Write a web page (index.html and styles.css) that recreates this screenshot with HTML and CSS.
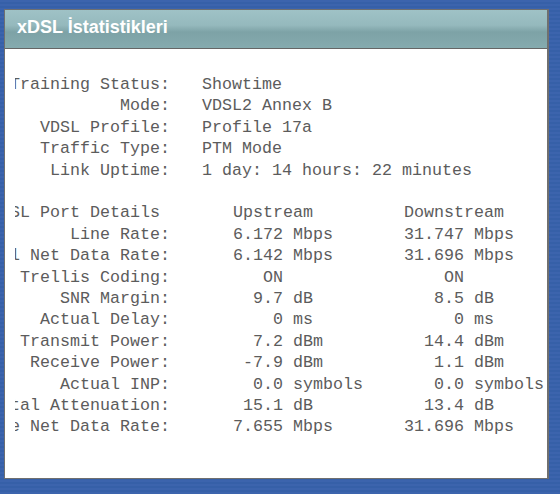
FILE: index.html
```html
<!DOCTYPE html>
<html lang="tr">
<head>
    <meta charset="UTF-8" />
    <title>xDSL İstatistikleri</title>
    <link rel="stylesheet" href="styles.css">
</head>
<body>
    <div class="panel">
        <div class="panel-head">xDSL İstatistikleri</div>
        <div class="panel-body">
            <div class="clip">
                <div class="summary">
                    <span class="lbl">Training Status:</span><span>Showtime</span>
                    <span class="lbl">Mode:</span><span>VDSL2 Annex B</span>
                    <span class="lbl">VDSL Profile:</span><span>Profile 17a</span>
                    <span class="lbl">Traffic Type:</span><span>PTM Mode</span>
                    <span class="lbl">Link Uptime:</span><span>1 day: 14 hours: 22 minutes</span>
                </div>

                <div class="details">
                    <span class="lbl title">VDSL Port Details</span>
                    <span class="up-head">Upstream</span>
                    <span class="down-head">Downstream</span>

                    <span class="lbl">Line Rate:</span>
                    <span class="num">6.172</span><span class="unit">Mbps</span>
                    <span class="num">31.747</span><span class="unit">Mbps</span>

                    <span class="lbl">Actual Net Data Rate:</span>
                    <span class="num">6.142</span><span class="unit">Mbps</span>
                    <span class="num">31.696</span><span class="unit">Mbps</span>

                    <span class="lbl">Trellis Coding:</span>
                    <span class="num">ON</span><span class="unit"></span>
                    <span class="num">ON</span><span class="unit"></span>

                    <span class="lbl">SNR Margin:</span>
                    <span class="num">9.7</span><span class="unit">dB</span>
                    <span class="num">8.5</span><span class="unit">dB</span>

                    <span class="lbl">Actual Delay:</span>
                    <span class="num">0</span><span class="unit">ms</span>
                    <span class="num">0</span><span class="unit">ms</span>

                    <span class="lbl">Transmit Power:</span>
                    <span class="num">7.2</span><span class="unit">dBm</span>
                    <span class="num">14.4</span><span class="unit">dBm</span>

                    <span class="lbl">Receive Power:</span>
                    <span class="num">-7.9</span><span class="unit">dBm</span>
                    <span class="num">1.1</span><span class="unit">dBm</span>

                    <span class="lbl">Actual INP:</span>
                    <span class="num">0.0</span><span class="unit">symbols</span>
                    <span class="num">0.0</span><span class="unit">symbols</span>

                    <span class="lbl">Total Attenuation:</span>
                    <span class="num">15.1</span><span class="unit">dB</span>
                    <span class="num">13.4</span><span class="unit">dB</span>

                    <span class="lbl">Aggregate Net Data Rate:</span>
                    <span class="num">7.655</span><span class="unit">Mbps</span>
                    <span class="num">31.696</span><span class="unit">Mbps</span>
                </div>
            </div>
        </div>
    </div>
</body>
</html>
```

FILE: styles.css
```css
body {
    margin: 0;
    height: 494px;
    overflow: hidden;
    background: repeating-linear-gradient(#3c64ad 0 2px, #3660a8 2px 4px);
}

.panel {
    box-sizing: border-box;
    display: flex;
    flex-direction: column;
    margin: 9px 0 0 4px;
    width: 545px;
    height: 470px;
    border: 1px solid #6f6f6f;
    border-right-width: 2px;
    background: #fff;
}

.panel-head {
    flex: none;
    height: 35px;
    line-height: 35px;
    padding: 0 0 3px 12px;
    border-bottom: 1px solid #666;
    background: linear-gradient(#9fc2c6 0%, #95b9bd 40%, #7da2a6 58%, #85abaf 100%);
    color: #fff;
    font-family: "Liberation Sans", Arial, sans-serif;
    font-size: 18px;
    font-weight: bold;
}

.panel-body {
    flex: 1;
    min-height: 0;
    padding-left: 10px;
    overflow: hidden;
}

.clip {
    box-sizing: border-box;
    overflow: hidden;
    height: 100%;
    padding-top: 25px;
    font-family: "Liberation Mono", "Courier New", monospace;
    font-size: 16.67px;
    line-height: 21.4px;
    color: #5c5c5c;
    white-space: nowrap;
}

.summary {
    display: grid;
    grid-template-columns: 240px auto;
    column-gap: 32px;
    margin-left: -85px;
    margin-bottom: 21.4px;
}

.lbl {
    text-align: right;
}

.details {
    display: grid;
    grid-template-columns: 240px 113px 121px 60px auto;
    margin-left: -85px;
}

    .details .title {
        padding-right: 10px;
    }

    .details .num {
        text-align: right;
    }

    .details .unit {
        padding-left: 10px;
    }

.up-head {
    grid-column: 2 / 4;
    padding-left: 63px;
}

.down-head {
    grid-column: 4 / 6;
}
```
